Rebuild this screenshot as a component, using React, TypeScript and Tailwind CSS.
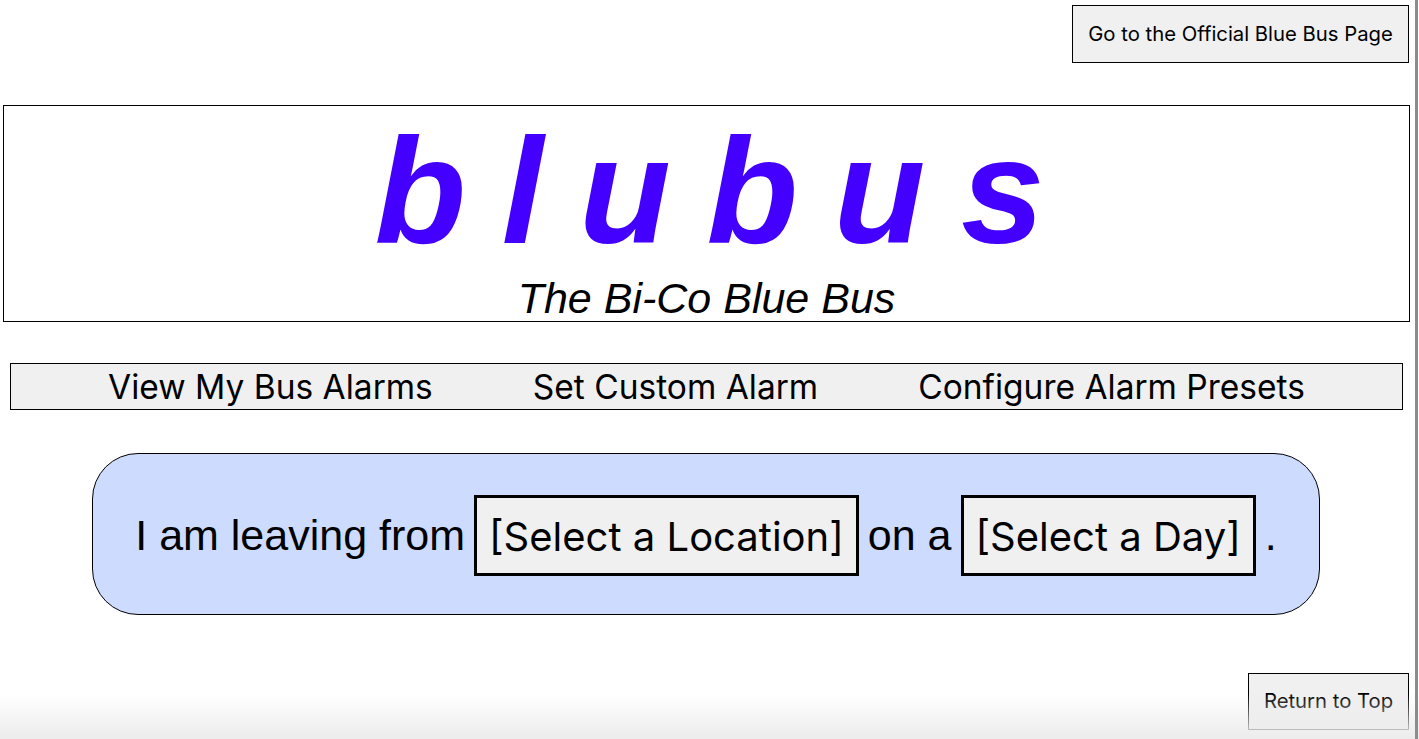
import React from 'react'

const uiFont = "font-['Inter','Liberation_Sans',sans-serif]"
const arial = "font-['Liberation_Sans',Arial,sans-serif]"

const GreyButton = ({ children, className }: { children: React.ReactNode; className?: string }) => (
  <button
    className={`${uiFont} border border-black bg-[#f0f0f0] text-[20.3px] leading-none text-black ${className ?? ''}`}
  >
    {children}
  </button>
)

const SelectBox = ({ label }: { label: string }) => (
  <button
    className={`${uiFont} flex h-[81px] items-center border-[3px] border-black bg-[#f0f0f0] px-[12px] pt-[3px] text-[40px] leading-none text-black`}
  >
    {label}
  </button>
)

export default function App() {
  return (
    <div className="relative h-[739px] w-[1419px] overflow-hidden bg-white">
      <div className="w-[1415px]">
        <div className="flex justify-end pt-[5px] pr-[6px]">
          <GreyButton className="h-[58px] w-[337px]">Go to the Official Blue Bus Page</GreyButton>
        </div>

        <header className="mt-[42px] ml-[3px] flex h-[217px] w-[1407px] flex-col items-center border border-black pt-[10px]">
          <h1
            className={`${arial} ml-[6px] h-[150px] text-[150px] leading-none font-bold whitespace-pre text-[#4400ff] italic [word-spacing:-6px]`}
          >
            b l u b u s
          </h1>
          <p className={`${arial} mt-[11px] h-[43px] text-[43px] leading-none text-black italic`}>
            The Bi-Co Blue Bus
          </p>
        </header>

        <nav
          className={`${uiFont} mt-[41px] ml-[10px] flex h-[47px] w-[1393px] items-center justify-center gap-[100px] border border-black bg-[#f0f0f0] pt-[2px] text-[33.5px] leading-none text-black`}
        >
          <span>View My Bus Alarms</span>
          <span>Set Custom Alarm</span>
          <span>Configure Alarm Presets</span>
        </nav>

        <section
          className={`${arial} mt-[43px] ml-[92px] flex h-[162px] w-[1228px] items-center justify-center gap-[9px] rounded-[46px] border border-black bg-[#ccdbfe] pt-[3px] text-[43px] leading-none text-black`}
        >
          <span>I am leaving from</span>
          <SelectBox label="[Select a Location]" />
          <span>on a</span>
          <SelectBox label="[Select a Day]" />
          <span>.</span>
        </section>

        <div className="mt-[58px] flex justify-end pr-[6px]">
          <GreyButton className="h-[57px] w-[161px]">Return to Top</GreyButton>
        </div>
      </div>

      <div className="pointer-events-none absolute inset-x-0 bottom-0 h-[45px] bg-gradient-to-b from-transparent to-[#ececec]" />
      <div className="pointer-events-none absolute top-0 right-[1px] h-full w-[3px] bg-[#8c8c8c]" />
    </div>
  )
}
